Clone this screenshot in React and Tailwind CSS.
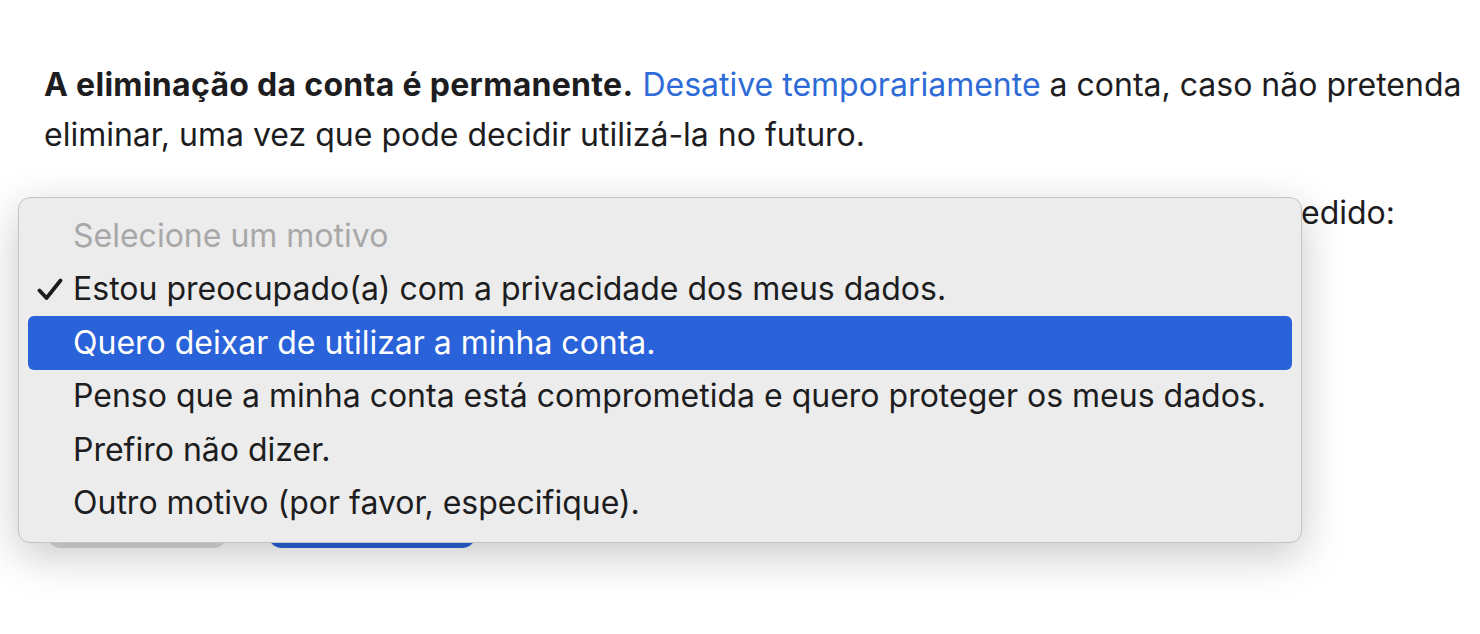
import React from 'react';

const reasons = [
  'Estou preocupado(a) com a privacidade dos meus dados.',
  'Quero deixar de utilizar a minha conta.',
  'Penso que a minha conta está comprometida e quero proteger os meus dados.',
  'Prefiro não dizer.',
  'Outro motivo (por favor, especifique).',
];

function Check() {
  return (
    <svg width="26" height="23" viewBox="0 0 26 23" className="shrink-0">
      <path d="M2.5 12.5 L9.5 20 L23.5 2.5" fill="none" stroke="#1d1d1f" strokeWidth="3.8" strokeLinecap="round" strokeLinejoin="round" />
    </svg>
  );
}

function ReasonMenu({ selected, highlighted }) {
  return (
    <div className="absolute left-[18px] top-[197px] w-[1284px] rounded-[12px] border border-[#c4c4c4] bg-[#ececec] px-[9px] pt-[11px] pb-[12px] shadow-[0_12px_44px_rgba(0,0,0,0.22)]">
      <div className="flex h-[53.5px] items-center pl-[45px] text-[#a8a8a8]">Selecione um motivo</div>
      {reasons.map((r, i) => (
        <div
          key={r}
          className={
            i === highlighted
              ? 'flex h-[53.5px] items-center rounded-[6px] bg-[#2962d9] pl-[45px] text-white'
              : 'relative flex h-[53.5px] items-center pl-[45px] text-[#1d1d1f]'
          }
        >
          {i === selected && (
            <span className="absolute left-[9px] top-[15px]">
              <Check />
            </span>
          )}
          {r}
        </div>
      ))}
    </div>
  );
}

export default function App() {
  return (
    <div className="relative h-[634px] overflow-hidden bg-white font-['Inter',sans-serif] text-[32px] text-[#1d1d1f]">
      <div className="pl-[44px] pt-[60px]">
        <p className="whitespace-nowrap leading-[50px]">
          <span className="font-bold tracking-[0.3px]">A eliminação da conta é permanente.</span>{' '}
          <a className="text-[#2f6bd6]">Desative temporariamente</a> a conta, caso não pretenda
          <br />
          eliminar, uma vez que pode decidir utilizá-la no futuro.
        </p>

        <div className="mt-[28px] w-[1351px] text-right leading-[50px]">Indique o motivo pelo qual está a fazer este pedido:</div>

        <div className="mt-[12px] h-[56px] w-[1200px] rounded-[12px] border border-[#c8c8c8]" />

        <div className="ml-[3px] mt-[186px] flex gap-[41px]">
          <button className="h-[56px] w-[180px] rounded-[14px] bg-[#dcdcdc]">Cancelar</button>
          <button className="h-[56px] w-[208px] rounded-[14px] bg-[#2a62d6] text-white">Continuar</button>
        </div>
      </div>

      <ReasonMenu selected={0} highlighted={1} />
    </div>
  );
}
